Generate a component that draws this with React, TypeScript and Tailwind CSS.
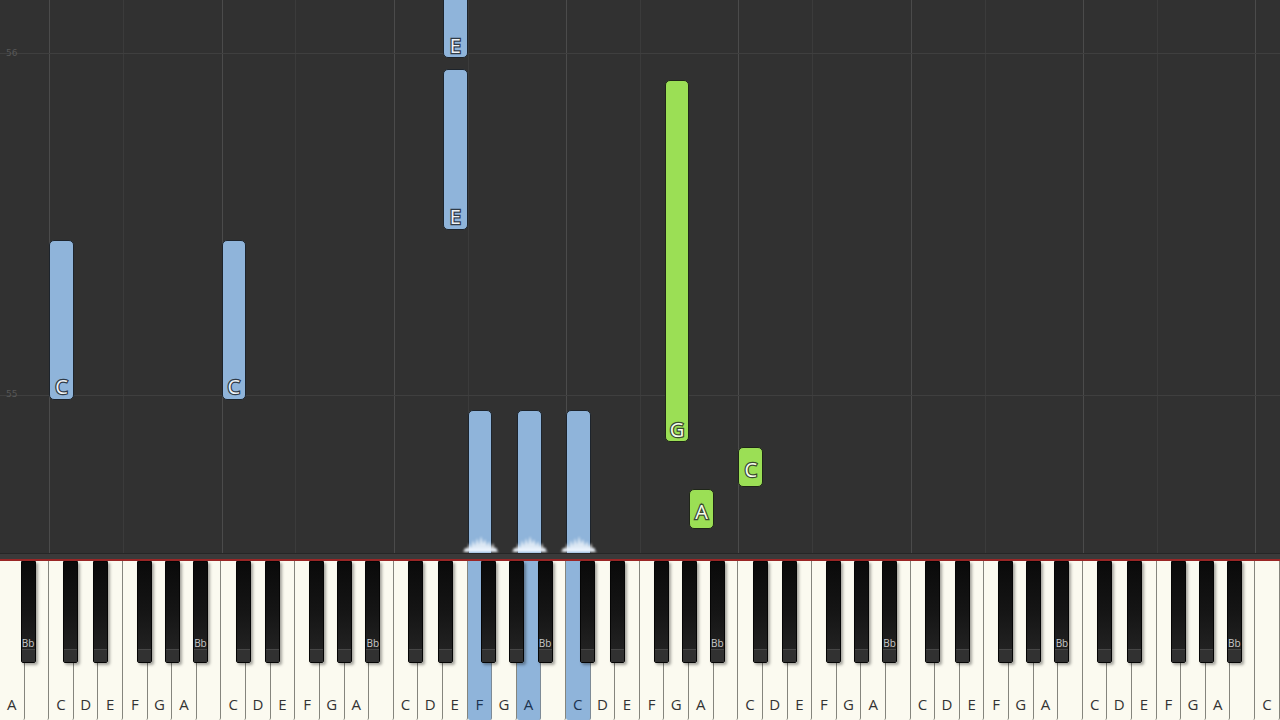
import React from "react";

const W = 1280 / 52;
const WHITE_NAMES = ["A", "B", "C", "D", "E", "F", "G"];
// black key after white index (mod 7): offset of its center from the boundary
const BLACK_AFTER: Record<number, { off: number; name: string }> = {
  0: { off: 3.5, name: "Bb" },
  2: { off: -3, name: "" },
  3: { off: 2, name: "" },
  5: { off: -3.5, name: "" },
  6: { off: 0, name: "" },
};
const PRESSED = [19, 21, 23];

type Note = {
  idx: number;
  top: number;
  bottom: number;
  color: "blue" | "green";
  label?: string;
  labelUp: number;
  splash?: boolean;
};

const notes: Note[] = [
  { idx: 18, top: -20, bottom: 58, color: "blue", label: "E", labelUp: 11 },
  { idx: 18, top: 69, bottom: 230, color: "blue", label: "E", labelUp: 12 },
  { idx: 2, top: 240, bottom: 400, color: "blue", label: "C", labelUp: 12 },
  { idx: 9, top: 240, bottom: 400, color: "blue", label: "C", labelUp: 12 },
  { idx: 19, top: 410, bottom: 560, color: "blue", labelUp: 0, splash: true },
  { idx: 21, top: 410, bottom: 560, color: "blue", labelUp: 0, splash: true },
  { idx: 23, top: 410, bottom: 560, color: "blue", labelUp: 0, splash: true },
  { idx: 27, top: 80, bottom: 442, color: "green", label: "G", labelUp: 11 },
  { idx: 30, top: 447, bottom: 487, color: "green", label: "C", labelUp: 16 },
  { idx: 28, top: 489, bottom: 529, color: "green", label: "A", labelUp: 16 },
];

function Splash() {
  return (
    <svg
      className="absolute left-[-6px] bottom-[7px] w-[36px] h-[18px] blur-[0.8px]"
      viewBox="0 0 36 18"
    >
      <polygon
        points="0,18 2,14 4,16 6,9 8,14 10,6 12,12 14,4 16,11 18,2 20,10 22,5 24,12 26,7 28,13 30,9 32,15 36,18"
        fill="#ffffff"
        opacity="0.7"
      />
      <rect x="2" y="14" width="32" height="4" fill="#eef5ff" opacity="0.8" />
    </svg>
  );
}

function NoteBar({ n }: { n: Note }) {
  const blue = n.color === "blue";
  return (
    <div
      className={
        blue
          ? "absolute rounded-[5px] border border-[#1d242c] bg-[#8fb4da]"
          : "absolute rounded-[5px] border border-[#1f2618] bg-[#9bdf55]"
      }
      style={{
        left: n.idx * W,
        width: W,
        top: n.top,
        height: n.bottom - n.top,
      }}
    >
      {n.label && (
        <span
          className={
            blue
              ? "absolute inset-x-0 text-center text-[20px] leading-[20px] font-medium text-[#eef2f6] [-webkit-text-stroke:2.5px_#2f3a46] [paint-order:stroke_fill]"
              : "absolute inset-x-0 text-center text-[20px] leading-[20px] font-medium text-[#f6ffec] [-webkit-text-stroke:2.5px_#3a4830] [paint-order:stroke_fill]"
          }
          style={{ bottom: n.labelUp - 10 }}
        >
          {n.label}
        </span>
      )}
      {n.splash && <Splash />}
    </div>
  );
}

function Roll() {
  const lines: { x: number; strong: boolean }[] = [];
  for (let i = 0; i < 52; i++) {
    const m = i % 7;
    if (m === 2) lines.push({ x: i * W, strong: true });
    if (m === 5) lines.push({ x: i * W, strong: false });
  }
  return (
    <div className="relative h-[553px] bg-[#313131] overflow-hidden">
      {lines.map((l, i) => (
        <div
          key={i}
          className={
            l.strong
              ? "absolute top-0 bottom-0 w-px bg-[#4b4b4b]"
              : "absolute top-0 bottom-0 w-px bg-[#3b3b3b]"
          }
          style={{ left: Math.round(l.x) }}
        />
      ))}
      <div className="absolute left-0 right-0 top-[53px] h-px bg-[#3f3f3f]" />
      <div className="absolute left-0 right-0 top-[395px] h-px bg-[#3f3f3f]" />
      <span className="absolute left-[6px] top-[47px] text-[9px] leading-[12px] text-[#575757] font-['DejaVu_Sans',sans-serif]">
        56
      </span>
      <span className="absolute left-[6px] top-[388px] text-[9px] leading-[12px] text-[#575757] font-['DejaVu_Sans',sans-serif]">
        55
      </span>
      {notes.map((n, i) => (
        <NoteBar key={i} n={n} />
      ))}
    </div>
  );
}

function Keyboard() {
  const whites = Array.from({ length: 52 }, (_, i) => i);
  const blacks: { left: number; name: string }[] = [];
  for (let i = 0; i < 51; i++) {
    const b = BLACK_AFTER[i % 7];
    if (b) blacks.push({ left: (i + 1) * W + b.off - 7.5, name: b.name });
  }
  return (
    <div className="relative h-[159px] flex bg-[#fbfaf0]">
      {whites.map((i) => {
        const name = WHITE_NAMES[i % 7];
        const pressed = PRESSED.includes(i);
        return (
          <div
            key={i}
            className={
              pressed
                ? "flex-1 h-full bg-[#8fb4da] border-r border-[#7d8a96] rounded-b-[2px] flex items-end justify-center pb-[6px]"
                : "flex-1 h-full bg-[#fbfaf0] border-r border-[#85857d] rounded-b-[2px] flex items-end justify-center pb-[6px]"
            }
          >
            <span
              className={
                pressed
                  ? "text-[15px] leading-[20px] text-[#1c3350]"
                  : "text-[15px] leading-[20px] text-[#333333]"
              }
            >
              {name === "B" ? "" : name}
            </span>
          </div>
        );
      })}
      {blacks.map((b, i) => (
        <div
          key={i}
          className="absolute top-0 w-[15px] h-[102px] flex flex-col border border-[#050505] rounded-b-[2px] bg-gradient-to-b from-[#0a0a0a] via-[#151515] to-[#262626] shadow-[2px_2px_3px_rgba(0,0,0,0.35)]"
          style={{ left: b.left }}
        >
          <div className="flex-1 flex items-end justify-center">
            <span className="text-[10px] leading-[12px] text-[#c9c9c9]">
              {b.name}
            </span>
          </div>
          <div className="h-[13px] bg-[#313131] border-t border-[#464646]" />
        </div>
      ))}
    </div>
  );
}

export default function App() {
  return (
    <div className="w-[1280px] h-[720px] overflow-hidden flex flex-col bg-[#313131] font-['Open_Sans','Liberation_Sans',sans-serif]">
      <Roll />
      <div className="h-[6px] bg-[#3a3a3a] border-t border-[#262626]" />
      <div className="h-[2px] bg-[#9a2626]" />
      <Keyboard />
    </div>
  );
}
